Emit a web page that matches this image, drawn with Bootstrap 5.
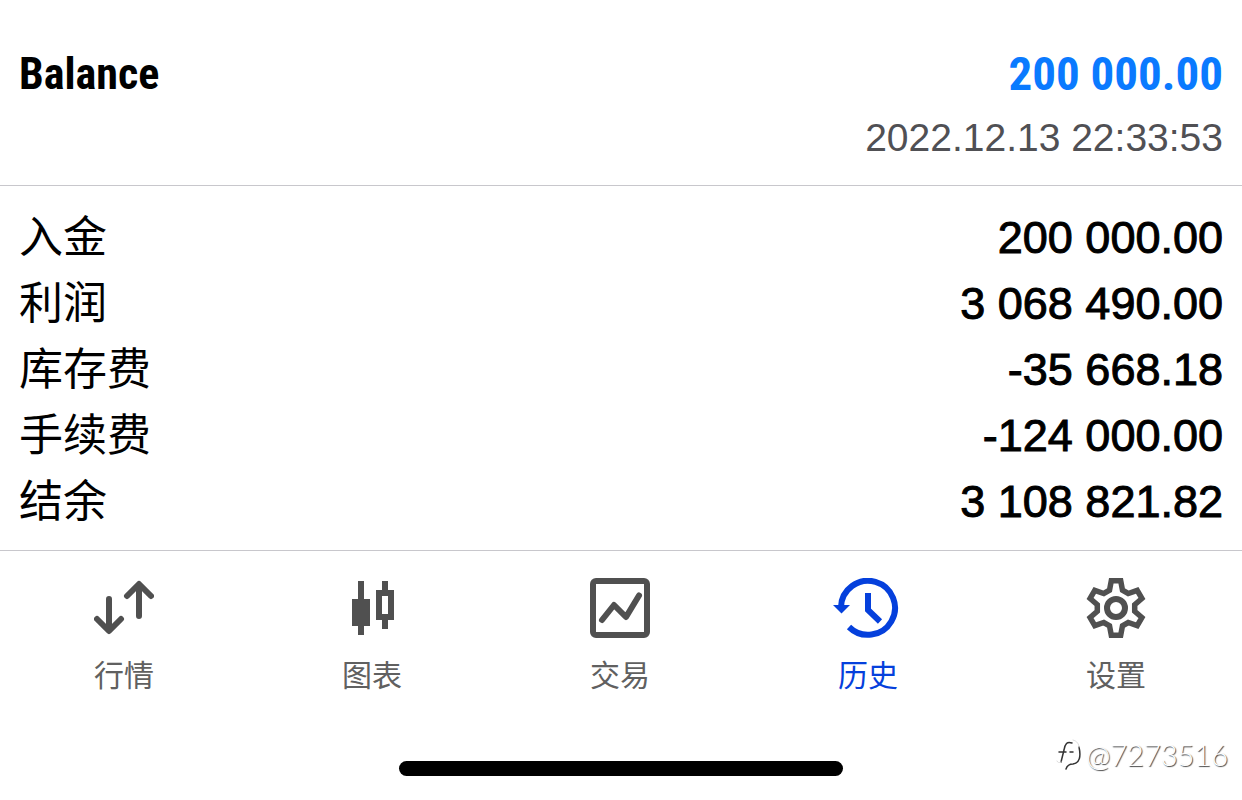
<!DOCTYPE html>
<html lang="zh-CN">
<head>
<meta charset="utf-8">
<meta name="viewport" content="width=device-width, initial-scale=1">
<title>历史</title>
<link href="https://cdn.jsdelivr.net/npm/bootstrap@5.3.0/dist/css/bootstrap.min.css" rel="stylesheet">
<style>
  body { background: #fff; color: #000; font-family: "Liberation Sans", "Noto Sans CJK SC", sans-serif; }
  .rule { border-bottom: 1px solid #c8c7cc; }
  .side { padding-left: 19px; padding-right: 19px; }
  .deal { padding-top: 44px; padding-bottom: 15px; }
  .deal-title { font-family: "Roboto Condensed", Roboto, sans-serif; font-weight: 700; line-height: 60px; }
  .deal-name { font-size: 44px; }
  .deal-sum { font-size: 47px; color: #0a7aff; }
  .deal-time { font-size: 39px; line-height: 66px; color: #505054; }
  .deal-time time { display: block; padding-top: 1px; margin-bottom: -1px; }
  .totals { padding-top: 19px; padding-bottom: 15px; }
  .totals th, .totals td { height: 66px; padding: 0; font-size: 45px; line-height: 60px; font-weight: 400; }
  .totals th { font-size: 44px; }
  .totals td { -webkit-text-stroke: 1px #000; }
  .tabs { padding-right: 2px; }
  .tab { color: #505050; font-size: 30px; line-height: 42px; padding: 27px 0 0; }
  .tab svg { height: 60px; display: block; margin-bottom: 17px; fill: none; stroke: currentColor; stroke-width: 6; }
  .tab-label { color: #606060; }
  .tab.active, .tab.active .tab-label { color: #0540dc; }
  .foot { display: grid; grid-template-columns: 1fr minmax(0, 444px) 1fr; padding: 28px 14px 0; }
  .home-bar { height: 15px; margin-top: 36px; border-radius: 8px; background: #000; }
  .user-mark { color: #fff; font-family: Lato, sans-serif; font-weight: 300; font-size: 29px; line-height: 44px; text-shadow: 1px 1px 1px #444; margin-top: 8px; }
</style>
</head>
<body>
<header class="deal side rule">
  <div class="deal-title d-flex justify-content-between align-items-center">
    <span class="deal-name">Balance</span>
    <span class="deal-sum">200 000.00</span>
  </div>
  <div class="deal-time text-end"><time datetime="2022-12-13T22:33:53">2022.12.13 22:33:53</time></div>
</header>

<main class="totals side rule">
  <table class="w-100">
    <tbody>
      <tr><th scope="row">入金</th><td class="text-end">200 000.00</td></tr>
      <tr><th scope="row">利润</th><td class="text-end">3 068 490.00</td></tr>
      <tr><th scope="row">库存费</th><td class="text-end">-35 668.18</td></tr>
      <tr><th scope="row">手续费</th><td class="text-end">-124 000.00</td></tr>
      <tr><th scope="row">结余</th><td class="text-end">3 108 821.82</td></tr>
    </tbody>
  </table>
</main>

<nav class="nav nav-fill flex-nowrap tabs">
  <a class="tab nav-item d-flex flex-column align-items-center text-decoration-none w-100" href="#quotes">
    <svg width="60" viewBox="0 0 60 60" stroke-linecap="round" stroke-linejoin="round" aria-hidden="true"><path d="M15 21V52M3 41L15 53L27 41M45 38V7M33 18L45 6L57 18"/></svg>
    <span class="tab-label">行情</span>
  </a>
  <a class="tab nav-item d-flex flex-column align-items-center text-decoration-none w-100" href="#chart">
    <svg width="60" viewBox="0 0 60 60" aria-hidden="true"><path fill="currentColor" fill-rule="evenodd" stroke="none" d="M16 3h6v18h6v27h-6v9h-6v-9h-6V21h6zM40 3h6v9h6v30h-6v9h-6v-9h-6V12h6zM40 18v18h6V18z"/></svg>
    <span class="tab-label">图表</span>
  </a>
  <a class="tab nav-item d-flex flex-column align-items-center text-decoration-none w-100" href="#trade">
    <svg width="60" viewBox="0 0 60 60" aria-hidden="true"><rect x="3" y="3" width="54" height="54" rx="3"/><path stroke-linecap="round" stroke-linejoin="round" d="M12 42L24 27L36 39L49 17.500"/></svg>
    <span class="tab-label">交易</span>
  </a>
  <a class="tab active nav-item d-flex flex-column align-items-center text-decoration-none w-100" href="#history" aria-current="page">
    <svg width="70" viewBox="0 0 70 60" aria-hidden="true"><path d="M8 29A27 27 0 1 1 16 49M35 15V32L47 43.500"/><path fill="currentColor" stroke="none" d="M0 27H17L8.500 35.500z"/></svg>
    <span class="tab-label">历史</span>
  </a>
  <a class="tab nav-item d-flex flex-column align-items-center text-decoration-none w-100" href="#settings">
    <svg width="60" viewBox="-30 -30 60 60" aria-hidden="true"><path stroke-width="5.500" d="M-4.700-27.200H4.700L6.500-17.800L12.200-14.500L21.200-17.700L25.900-9.500L18.700-3.300V3.300L25.900 9.500L21.200 17.700L12.200 14.500L6.500 17.800L4.700 27.200H-4.700L-6.500 17.800L-12.200 14.500L-21.200 17.700L-25.900 9.500L-18.700 3.300V-3.300L-25.900-9.500L-21.200-17.700L-12.200-14.500L-6.500-17.800z"/><circle r="9"/></svg>
    <span class="tab-label">设置</span>
  </a>
</nav>

<footer class="foot">
  <div></div>
  <div class="home-bar"></div>
  <div class="user-mark d-flex justify-content-end align-items-center">
    <svg class="me-1" width="27" height="34" viewBox="0 0 27 34" fill="none" stroke-linecap="round" aria-hidden="true">
      <path stroke="#333" stroke-width="1.500" d="M17 5C12 3 10 6 9 12L6 24M4 14H11M15 14H18M24 9C26 18 25 25 18 26C14 26 12 28 11 31"/>
      <path stroke="#ddd" stroke-width="1" d="M18 2C22 3 24 6 24 9M2 23C3 25 4 25 6 24"/>
    </svg>
    <span>@7273516</span>
  </div>
</footer>
<script src="https://cdn.jsdelivr.net/npm/bootstrap@5.3.0/dist/js/bootstrap.bundle.min.js"></script>
</body>
</html>
